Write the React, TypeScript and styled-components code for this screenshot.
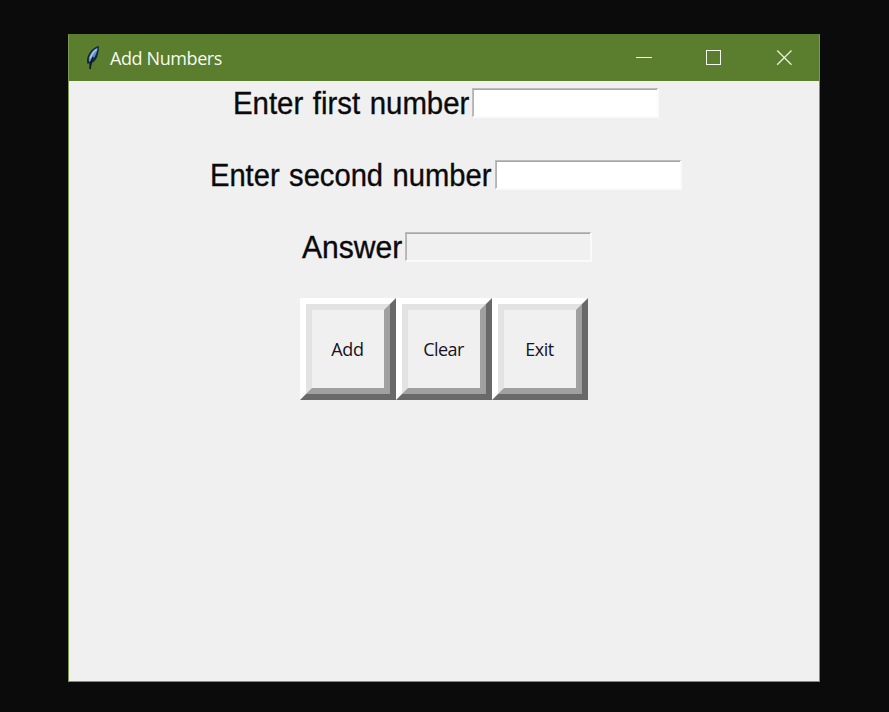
import React from "react";
import styled, { createGlobalStyle } from "styled-components";

const GlobalStyle = createGlobalStyle`
  * { box-sizing: border-box; }
  body { margin: 0; background: #0b0b0b; overflow: hidden; }
`;

const Desktop = styled.div`
  height: 712px;
  padding: 34px 69px 30px 68px;
  background: #0b0b0b;
`;

const Window = styled.main`
  height: 648px;
  display: flex;
  flex-direction: column;
  border: 1px solid #7c9852;
  border-top-color: #5b7d30;
  background: #f0f0f0;
`;

const TitleBar = styled.header`
  flex: 0 0 46px;
  display: flex;
  align-items: center;
  padding-left: 15px;
  background: #5a7d2e;
`;

const Title = styled.h1`
  flex: 1;
  margin: 0 0 0 8px;
  font: 400 18px/24px "Open Sans", "Noto Sans", sans-serif;
  letter-spacing: -0.4px;
  color: #f6faef;
`;

const Controls = styled.div`
  display: flex;
`;

const ControlButton = styled.button`
  width: 70px;
  height: 46px;
  display: grid;
  place-items: center;
  padding: 0;
  border: 0;
  background: transparent;
`;

const Form = styled.section`
  display: flex;
  flex-direction: column;
  gap: 36px;
  padding-top: 4px;
`;

const Field = styled.label<{ $shift: number }>`
  height: 36px;
  display: flex;
  align-items: center;
  padding-left: ${(p) => p.$shift}px;
`;

const LabelText = styled.span<{ $width: number; $stretch: number }>`
  flex: none;
  width: ${(p) => p.$width}px;
  padding: 1px 0 0 1px;
  font: 400 31px/36px "Liberation Sans", Arial, sans-serif;
  word-spacing: 1.5px;
  transform: scaleX(${(p) => p.$stretch});
  transform-origin: left;
  -webkit-text-stroke: 0.35px #0a0a0a;
  white-space: nowrap;
  color: #0a0a0a;
`;

const Entry = styled.input<{ $bg: string }>`
  width: 187px;
  height: 30px;
  padding: 0 4px;
  outline: 0;
  border: solid;
  border-width: 1px 2px 2px 1px;
  border-color: #bcbcbc #fafafa #fafafa #bcbcbc;
  box-shadow: inset 0 1px #a6a6a6, inset 1px 0 #b4b4b4;
  background: ${(p) => p.$bg};
  border-radius: 0;
`;

const ButtonRow = styled.div`
  display: flex;
  padding: 33px 0 0 231px;
`;

const RaisedButton = styled.button`
  width: 96px;
  height: 102px;
  padding: 0;
  border: 6px solid;
  border-color: #fff #696969 #696969 #fff;
  border-radius: 0;
  background: #f0f0f0;
`;

const ButtonFace = styled.span`
  width: 84px;
  height: 90px;
  display: grid;
  place-items: center;
  padding-right: 1px;
  border: 6px solid;
  border-color: #e3e3e3 #a0a0a0 #a0a0a0 #e3e3e3;
  font: 400 18px/24px "Open Sans", "Noto Sans", sans-serif;
  color: #17131c;
`;

const ButtonText = styled.span<{ $spacing: number }>`
  letter-spacing: ${(p) => p.$spacing}px;
`;

const fields = [
  { label: "Enter first number", shift: 163, width: 240, stretch: 0.948, bg: "#fff" },
  { label: "Enter second number", shift: 140, width: 286, stretch: 0.94, bg: "#fff" },
  { label: "Answer", shift: 232, width: 104, stretch: 0.97, bg: "#f0f0f0" },
];

const actions = [
  { label: "Add", spacing: -0.3 },
  { label: "Clear", spacing: -0.6 },
  { label: "Exit", spacing: -0.5 },
];

const Feather = () => (
  <svg width="18" height="26" viewBox="0 0 18 26">
    <path d="M14.800 1C9.800 2 4.600 7.500 3.300 13c-.6 2.600-.3 4.600.4 6l1.500-1L6.200 25l1.500-7c3.100-1.300 5.200-4.300 6.100-8.200.7-3 1.300-6.200 1-8.800Z" fill="#14233a" />
    <path d="M13.700 2.600C9.300 4.700 5.400 9.400 4.700 14.700l.6 2.400 2.100-1.500c3.500-2.500 5.400-7.200 6.300-13Z" fill="#5b8fc9" />
    <path d="M12.800 4.300C9.600 6.600 7.300 9.500 6.300 13.500" fill="none" stroke="#a9cbe8" strokeWidth="1.500" />
    <path d="M9.200 12C7.500 15 6.500 18 6.100 24" fill="none" stroke="#101a26" strokeWidth="1.600" />
  </svg>
);

export default function App() {
  return (
    <Desktop>
      <GlobalStyle />
      <Window>
        <TitleBar>
          <Feather />
          <Title>Add Numbers</Title>
          <Controls>
            <ControlButton aria-label="Minimize">
              <svg width="16" height="16"><path d="M0 7.500h16" stroke="#f4f8ec" /></svg>
            </ControlButton>
            <ControlButton aria-label="Maximize">
              <svg width="16" height="16" shapeRendering="crispEdges"><path d="M.5.5h14v14H.5Z" fill="none" stroke="#f4f8ec" /></svg>
            </ControlButton>
            <ControlButton aria-label="Close">
              <svg width="16" height="16"><path d="m1.200.5 14.300 14.300m0-14.300L1.200 14.800" stroke="#e6f1d9" strokeWidth="1.300" /></svg>
            </ControlButton>
          </Controls>
        </TitleBar>
        <Form>
          {fields.map((f) => (
            <Field key={f.label} $shift={f.shift}>
              <LabelText $width={f.width} $stretch={f.stretch}>{f.label}</LabelText>
              <Entry $bg={f.bg} readOnly={f.label === "Answer"} />
            </Field>
          ))}
        </Form>
        <ButtonRow>
          {actions.map((a) => (
            <RaisedButton key={a.label}>
              <ButtonFace><ButtonText $spacing={a.spacing}>{a.label}</ButtonText></ButtonFace>
            </RaisedButton>
          ))}
        </ButtonRow>
      </Window>
    </Desktop>
  );
}
